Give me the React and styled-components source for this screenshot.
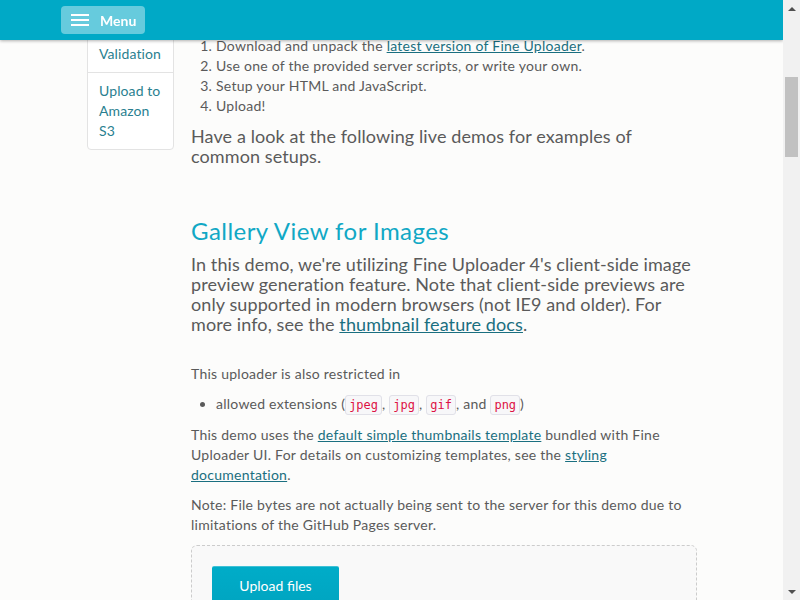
import { useLayoutEffect, useRef } from "react";
import styled, { createGlobalStyle } from "styled-components";

const GlobalStyle = createGlobalStyle`
  html, body {
    margin: 0;
    padding: 0;
    background: #fcfcfb;
  }
  body {
    font-family: Lato, "Open Sans", sans-serif;
    font-size: 14px;
    line-height: 20px;
    letter-spacing: 0.25px;
    color: #5a5a5a;
  }
`;

const sideLinks = [
  "Gallery View",
  "Simple Thumbnails",
  "Validation",
  "Upload to Amazon S3",
];

const extensions = ["jpeg", "jpg", "gif", "png"];

function App() {
  const headingRef = useRef(null);

  useLayoutEffect(() => {
    const top = headingRef.current.getBoundingClientRect().top + window.scrollY;
    window.scrollTo(0, top - 216);
  }, []);

  const steps = [
    <>
      Download and unpack the <Link href="#">latest version of Fine Uploader</Link>.
    </>,
    "Use one of the provided server scripts, or write your own.",
    "Setup your HTML and JavaScript.",
    "Upload!",
  ];

  return (
    <>
      <GlobalStyle />
      <NavBar>
        <MenuButton>
          <Burger>
            <span />
            <span />
            <span />
          </Burger>
          Menu
        </MenuButton>
      </NavBar>
      <ScrollBar>
        <Arrow $dir="up" />
        <Track>
          <Thumb />
        </Track>
        <Arrow $dir="down" />
      </ScrollBar>
      <Masthead>
        <MastTitle>Fine Uploader Demos</MastTitle>
        <MastText>Live examples of the most common uploader setups.</MastText>
      </Masthead>
      <Page>
        <SideNav>
          {sideLinks.map((item) => (
            <SideItem key={item}>
              <a href="#">{item}</a>
            </SideItem>
          ))}
        </SideNav>
        <Main>
          <Intro>
            <PageTitle>Getting Started</PageTitle>
            <Lead>
              Fine Uploader is easy to set up. Here is all you need to get
              started with the library.
            </Lead>
          </Intro>
          <Steps>
            {steps.map((step, idx) => (
              <li key={idx}>{step}</li>
            ))}
          </Steps>
          <Lead>
            Have a look at the following live demos for examples of common
            setups.
          </Lead>

          <Section>
            <Heading ref={headingRef}>Gallery View for Images</Heading>
            <Lead>
              In this demo, we're utilizing Fine Uploader 4's client-side image
              preview generation feature. Note that client-side previews are
              only supported in modern browsers (not IE9 and older). For more
              info, see the <Link href="#">thumbnail feature docs</Link>.
            </Lead>
            <Text $top={30}>This uploader is also restricted in</Text>
            <Bullets>
              <li>
                allowed extensions (
                {extensions.map((ext, idx) => (
                  <span key={ext}>
                    <Code>{ext}</Code>
                    {idx < 2 ? ", " : idx === 2 ? ", and " : ""}
                  </span>
                ))}
                )
              </li>
            </Bullets>
            <Text>
              This demo uses the{" "}
              <Link href="#">default simple thumbnails template</Link> bundled
              with Fine Uploader UI. For details on customizing templates, see
              the <Link href="#">styling documentation</Link>.
            </Text>
            <Text>
              Note: File bytes are not actually being sent to the server for
              this demo due to limitations of the GitHub Pages server.
            </Text>
            <DropZone>
              <UploadButton>Upload files</UploadButton>
            </DropZone>
          </Section>

          <Section>
            <Heading>Simple Thumbnails</Heading>
            <Lead>
              A lighter template that shows a small preview next to each file
              along with its upload progress.
            </Lead>
          </Section>
        </Main>
      </Page>
    </>
  );
}

const NavBar = styled.header`
  position: fixed;
  top: 0;
  left: 0;
  right: 17px;
  height: 40px;
  background: #00a9c6;
  box-shadow: 0 1px 3px rgba(0, 0, 0, 0.3);
  z-index: 100;
  display: flex;
  align-items: center;
`;

const MenuButton = styled.button`
  display: flex;
  align-items: center;
  gap: 11px;
  margin: 0 0 0 61px;
  height: 28px;
  width: 84px;
  padding: 0 10px;
  border: 0;
  border-radius: 4px;
  background: rgba(255, 255, 255, 0.4);
  color: #fff;
  font-family: Lato, sans-serif;
  font-size: 14px;
  font-weight: 700;
  cursor: pointer;
`;

const Burger = styled.span`
  display: flex;
  flex-direction: column;
  gap: 3px;

  span {
    display: block;
    width: 18px;
    height: 2px;
    background: #fff;
  }
`;

const ScrollBar = styled.div`
  position: fixed;
  top: 0;
  right: 0;
  bottom: 0;
  width: 17px;
  background: #f1f1f1;
  display: flex;
  flex-direction: column;
  z-index: 200;
`;

const Arrow = styled.div`
  height: 17px;
  flex: none;
  display: flex;
  align-items: center;
  justify-content: center;

  &::before {
    content: "";
    border-left: 4px solid transparent;
    border-right: 4px solid transparent;
    ${({ $dir }) =>
      $dir === "up"
        ? "border-bottom: 4px solid #505050;"
        : "border-top: 4px solid #505050;"}
  }
`;

const Track = styled.div`
  flex: 1;
  padding: 60px 2px 0;
`;

const Thumb = styled.div`
  height: 80px;
  background: #c1c1c1;
`;

const Masthead = styled.div`
  padding: 110px 0 90px 191px;
`;

const MastTitle = styled.h1`
  margin: 0;
  font-size: 40px;
  line-height: 48px;
  font-weight: 400;
  color: #00a9c6;
`;

const MastText = styled.p`
  margin: 10px 0 0;
  font-size: 18px;
`;

const Page = styled.div`
  display: flex;
  align-items: flex-start;
  gap: 17px;
  padding: 0 0 0 87px;
  min-height: 3900px;
`;

const SideNav = styled.ul`
  box-sizing: border-box;
  width: 87px;
  flex: none;
  margin: 0;
  padding: 0;
  list-style: none;
  border: 1px solid #e3e3e3;
  border-radius: 4px;
  background: #fff;
`;

const SideItem = styled.li`
  & + & {
    border-top: 1px solid #e3e3e3;
  }

  a {
    display: block;
    padding: 8px 5px 8px 11px;
    letter-spacing: 0.1px;
    color: #2a7f90;
    text-decoration: none;
  }
`;

const Main = styled.main`
  width: 506px;
  flex: none;
`;

const Intro = styled.div`
  margin-bottom: 25px;
`;

const PageTitle = styled.h2`
  margin: 0 0 10px;
  font-size: 30px;
  line-height: 40px;
  font-weight: 400;
  color: #00a9c6;
`;

const Steps = styled.ol`
  margin: 0;
  padding-left: 25px;
`;

const Lead = styled.p`
  margin: 10px 0 0;
  font-size: 18px;
  line-height: 20px;
  letter-spacing: 0.1px;
`;

const Section = styled.section`
  margin-top: 50px;
`;

const Heading = styled.h2`
  margin: 0 0 -2px;
  font-size: 24px;
  line-height: 30px;
  font-weight: 400;
  letter-spacing: 0.45px;
  color: #11a8c5;
`;

const Text = styled.p`
  margin: ${({ $top }) => $top || 10}px 0 0;
`;

const Bullets = styled.ul`
  margin: 10px 0 0;
  padding-left: 25px;
`;

const Code = styled.code`
  padding: 2px 3px;
  font-family: "DejaVu Sans Mono", monospace;
  font-size: 12px;
  letter-spacing: 0;
  color: #dd1144;
  background: #f7f7f9;
  border: 1px solid #e1e1e8;
  border-radius: 3px;
`;

const Link = styled.a`
  color: #1a6f80;
  text-decoration: underline;
`;

const DropZone = styled.div`
  margin-top: 10px;
  min-height: 300px;
  padding: 20px;
  border: 1px dashed #cccccc;
  border-radius: 6px;
  background: #f9f9f9;
`;

const UploadButton = styled.button`
  display: block;
  width: 127px;
  height: 38px;
  border: 0;
  border-top: 1px solid #3fc1d6;
  border-radius: 2px;
  background: linear-gradient(#00acc8, #00a5c1);
  color: #fff;
  font-family: Lato, sans-serif;
  font-size: 14px;
  cursor: pointer;
`;

export default App;
